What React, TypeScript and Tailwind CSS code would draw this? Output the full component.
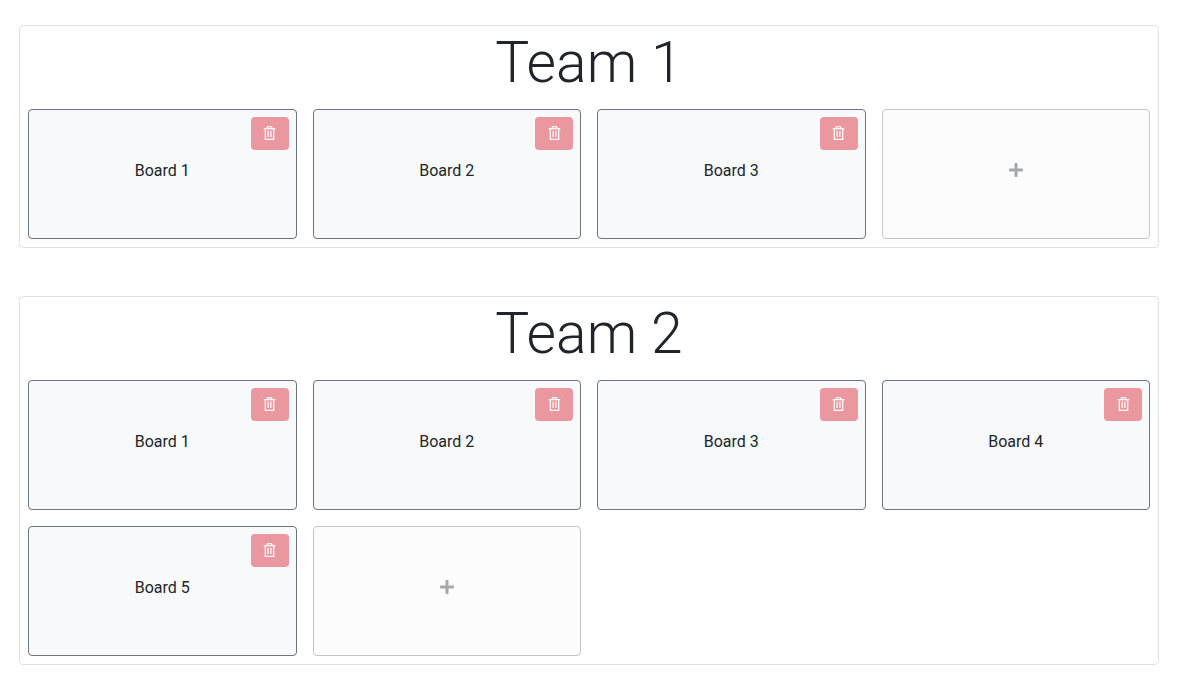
import { FaPlus } from 'react-icons/fa';

type Team = { name: string; boards: string[] };

const teams: Team[] = [
  { name: 'Team 1', boards: ['Board 1', 'Board 2', 'Board 3'] },
  { name: 'Team 2', boards: ['Board 1', 'Board 2', 'Board 3', 'Board 4', 'Board 5'] },
];

function TrashIcon() {
  return (
    <svg
      className="h-[14px] w-[11px] overflow-visible"
      viewBox="0 0 11 14"
      fill="none"
      stroke="currentColor"
      strokeWidth="1.25"
      aria-hidden="true"
    >
      <path d="M-0.3 2.7h11.6" />
      <path d="M3.1 2.6V1.7a1 1 0 0 1 1-1h2.8a1 1 0 0 1 1 1v0.9" />
      <path d="M1.3 2.7v10.7h8.4V2.7" />
      <path d="M4.1 4.8v6.2M6.9 4.8v6.2" />
    </svg>
  );
}

function BoardCard({ name }: { name: string }) {
  return (
    <div className="relative flex h-[130px] items-center justify-center rounded border border-[#6c757d] bg-[#f8f9fa] pb-[6px]">
      <a href="#" className="text-base text-[#212529]">
        {name}
      </a>
      <button
        type="button"
        aria-label={`Delete ${name}`}
        className="absolute top-[7px] right-[7px] flex h-[33px] w-[38px] items-center justify-center rounded bg-[#eb979f] pb-px text-white"
      >
        <TrashIcon />
      </button>
    </div>
  );
}

function TeamSection({ team }: { team: Team }) {
  return (
    <section className="rounded border border-[#dee2e6] p-2">
      <h1 className="mb-[18px] text-center text-[57px] leading-[57px] font-light">{team.name}</h1>
      <div className="grid grid-cols-4 gap-4">
        {team.boards.map((board) => (
          <BoardCard key={board} name={board} />
        ))}
        <button
          type="button"
          aria-label={`Add board to ${team.name}`}
          className="flex h-[130px] items-center justify-center rounded border border-[#c4c6c8] bg-[#fcfcfc] pb-2 text-[#a6a8a9]"
        >
          <FaPlus className="text-base" />
        </button>
      </div>
    </section>
  );
}

export default function App() {
  return (
    <main className="flex flex-col gap-12 bg-white pt-[25px] pr-[27px] pb-4 pl-[19px] font-['Roboto',sans-serif] text-[#212529]">
      {teams.map((team) => (
        <TeamSection key={team.name} team={team} />
      ))}
    </main>
  );
}
